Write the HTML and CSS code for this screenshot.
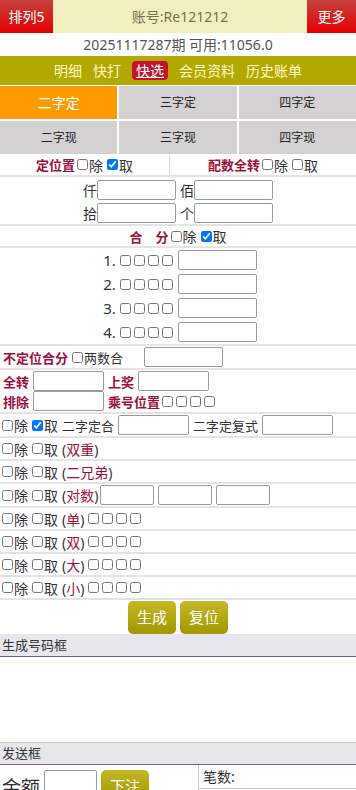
FILE: index.html
```html
<!DOCTYPE html>
<html>
<head>
	<title>快选</title>
	<meta charset="utf-8">
	<link rel="stylesheet" href="styles.css">
</head>
<body>
	<!-- 顶部栏 -->
	<div class="top">
		<a href="#" class="top-btn">排列5</a>
		<div class="top-account">账号:Re121212</div>
		<a href="#" class="top-btn top-more">更多</a>
	</div>
	<div class="top-info">20251117287期 可用:11056.0</div>
	<!-- 导航 -->
	<div class="nav">
		<a href="#" class="nav-item">明细</a>
		<a href="#" class="nav-item">快打</a>
		<a href="#" class="nav-item active">快选</a>
		<a href="#" class="nav-item">会员资料</a>
		<a href="#" class="nav-item">历史账单</a>
	</div>
	<!-- 玩法切换 -->
	<div class="tabs">
		<div class="tab active">二字定</div>
		<div class="tab">三字定</div>
		<div class="tab">四字定</div>
		<div class="tab">二字现</div>
		<div class="tab">三字现</div>
		<div class="tab">四字现</div>
	</div>

	<!-- 定位置 / 配数全转 -->
	<div class="row split">
		<div class="half half-left">
			<span class="label">定位置</span>
			<input type="checkbox" class="chk">除
			<input type="checkbox" class="chk gap" checked>取
		</div>
		<div class="half">
			<span class="label">配数全转</span>
			<input type="checkbox" class="chk">除
			<input type="checkbox" class="chk gap">取
		</div>
	</div>
	<div class="row pos-box">
		<div class="line center">
			<span>仟</span><input type="text" class="txt">
			<span class="pos-name">佰</span><input type="text" class="txt">
		</div>
		<div class="line center">
			<span>拾</span><input type="text" class="txt">
			<span class="pos-name">个</span><input type="text" class="txt">
		</div>
	</div>

	<!-- 合分 -->
	<div class="row">
		<div class="line line-sum center">
			<span class="label">合　分</span>
			<input type="checkbox" class="chk">除
			<input type="checkbox" class="chk gap" checked>取
		</div>
	</div>
	<div class="row sum-box">
		<div class="line center">
			<span class="num">1.</span>
			<input type="checkbox" class="chk"><input type="checkbox" class="chk"><input type="checkbox" class="chk"><input type="checkbox" class="chk">
			<input type="text" class="txt sum-txt">
		</div>
		<div class="line center">
			<span class="num">2.</span>
			<input type="checkbox" class="chk"><input type="checkbox" class="chk"><input type="checkbox" class="chk"><input type="checkbox" class="chk">
			<input type="text" class="txt sum-txt">
		</div>
		<div class="line center">
			<span class="num">3.</span>
			<input type="checkbox" class="chk"><input type="checkbox" class="chk"><input type="checkbox" class="chk"><input type="checkbox" class="chk">
			<input type="text" class="txt sum-txt">
		</div>
		<div class="line center">
			<span class="num">4.</span>
			<input type="checkbox" class="chk"><input type="checkbox" class="chk"><input type="checkbox" class="chk"><input type="checkbox" class="chk">
			<input type="text" class="txt sum-txt">
		</div>
	</div>

	<!-- 不定位合分 -->
	<div class="row">
		<div class="line line-tall indent">
			<span class="label">不定位合分</span>
			<input type="checkbox" class="chk gap">
			<span class="small">两数合</span>
			<input type="text" class="txt two-txt">
		</div>
	</div>

	<!-- 全转 / 排除 -->
	<div class="row turn-box">
		<div class="line line-s indent">
			<span class="label">全转</span><input type="text" class="txt mid-txt">
			<span class="label">上奖</span><input type="text" class="txt mid-txt">
		</div>
		<div class="line line-s indent">
			<span class="label">排除</span><input type="text" class="txt mid-txt">
			<span class="label">乘号位置</span>
			<input type="checkbox" class="chk"><input type="checkbox" class="chk"><input type="checkbox" class="chk"><input type="checkbox" class="chk">
		</div>
	</div>

	<!-- 二字定合 -->
	<div class="row">
		<div class="line line-tall">
			<input type="checkbox" class="chk">除
			<input type="checkbox" class="chk gap" checked>取
			<span class="word">二字定合</span><input type="text" class="txt mid-txt">
			<span class="small">二字定复式</span><input type="text" class="txt mid-txt">
		</div>
	</div>

	<div class="row">
		<div class="line">
			<input type="checkbox" class="chk">除
			<input type="checkbox" class="chk gap">取
			<span class="kind">(<em>双重</em>)</span>
		</div>
	</div>
	<div class="row">
		<div class="line">
			<input type="checkbox" class="chk">除
			<input type="checkbox" class="chk gap">取
			<span class="kind">(<em>二兄弟</em>)</span>
		</div>
	</div>
	<div class="row">
		<div class="line line-tall">
			<input type="checkbox" class="chk">除
			<input type="checkbox" class="chk gap">取
			<span class="kind">(<em>对数</em>)</span>
			<input type="text" class="txt pair-txt"><input type="text" class="txt pair-txt"><input type="text" class="txt pair-txt">
		</div>
	</div>
	<div class="row">
		<div class="line">
			<input type="checkbox" class="chk">除
			<input type="checkbox" class="chk gap">取
			<span class="kind">(<em>单</em>)</span>
			<input type="checkbox" class="chk"><input type="checkbox" class="chk"><input type="checkbox" class="chk"><input type="checkbox" class="chk">
		</div>
	</div>
	<div class="row">
		<div class="line">
			<input type="checkbox" class="chk">除
			<input type="checkbox" class="chk gap">取
			<span class="kind">(<em>双</em>)</span>
			<input type="checkbox" class="chk"><input type="checkbox" class="chk"><input type="checkbox" class="chk"><input type="checkbox" class="chk">
		</div>
	</div>
	<div class="row">
		<div class="line">
			<input type="checkbox" class="chk">除
			<input type="checkbox" class="chk gap">取
			<span class="kind">(<em>大</em>)</span>
			<input type="checkbox" class="chk"><input type="checkbox" class="chk"><input type="checkbox" class="chk"><input type="checkbox" class="chk">
		</div>
	</div>
	<div class="row">
		<div class="line">
			<input type="checkbox" class="chk">除
			<input type="checkbox" class="chk gap">取
			<span class="kind">(<em>小</em>)</span>
			<input type="checkbox" class="chk"><input type="checkbox" class="chk"><input type="checkbox" class="chk"><input type="checkbox" class="chk">
		</div>
	</div>

	<!-- 按钮 -->
	<div class="btns">
		<a href="#" class="btn">生成</a>
		<a href="#" class="btn">复位</a>
	</div>

	<!-- 生成号码框 -->
	<div class="box-title">生成号码框</div>
	<div class="box-body"></div>

	<!-- 发送框 -->
	<div class="box-title send-title">发送框</div>
	<div class="send">
		<div class="send-left">
			<span class="money">金额</span>
			<input type="text" class="txt money-txt">
			<a href="#" class="btn send-btn">下注</a>
		</div>
		<div class="send-right">
			<div class="count">笔数:</div>
		</div>
	</div>
</body>
</html>
```

FILE: styles.css
```css
body {
	margin: 0;
	width: 356px;
	font-family: "Noto Sans", "Noto Sans CJK SC", sans-serif;
	font-size: 14px;
	color: #333;
	overflow: hidden;
}
a {
	text-decoration: none;
}
em {
	font-style: normal;
}
/* 顶部栏 */
.top {
	display: flex;
	height: 33px;
	background-color: #f2efbf;
}
.top-btn {
	width: 53px;
	line-height: 33px;
	text-align: center;
	color: #fff;
	background: linear-gradient(#c6413f, #e50000);
}
.top-more {
	width: 49px;
}
.top-account {
	flex: 1;
	line-height: 33px;
	text-align: center;
	color: #7a7255;
}
.top-info {
	height: 23px;
	line-height: 23px;
	text-align: center;
	color: #555;
}
/* 导航 */
.nav {
	display: flex;
	justify-content: center;
	align-items: center;
	gap: 11px;
	height: 29px;
	background-color: #b2a800;
	font-size: 14px;
}
.nav-item {
	color: #fff8cc;
	line-height: 19px;
}
.nav-item.active {
	background-color: #c4122f;
	color: #fff;
	text-decoration: underline;
	border-radius: 4px;
	padding: 0 4px;
}
/* 玩法切换 */
.tabs {
	display: grid;
	grid-template-columns: repeat(3, 1fr);
	gap: 2px;
	padding-top: 1px;
}
.tab {
	height: 33px;
	line-height: 33px;
	text-align: center;
	background-color: #d3d1d1;
	font-size: 12px;
	color: #222;
}
.tab.active {
	background-color: #ff9a00;
	color: #fff;
	font-size: 14px;
}
/* 表单行 */
.row {
	border-bottom: 2px solid #e4e4e4;
}
.line {
	display: flex;
	align-items: center;
	height: 21px;
	white-space: nowrap;
}
.line.center {
	justify-content: center;
}
.line-tall {
	height: 22px;
}
.line-s {
	height: 20px;
}
.line-sum {
	height: 20px;
}
.indent {
	padding-left: 3px;
}
.label {
	color: #a0103c;
	font-weight: bold;
	font-size: 13px;
}
.small {
	font-size: 13px;
}
.chk {
	width: 11px;
	height: 11px;
	margin: 0 1px 0 2px;
}
.chk.gap {
	margin-left: 4px;
}
.txt {
	box-sizing: border-box;
	width: 79px;
	height: 20px;
	margin: 0;
	padding: 0 2px;
	border: 1px solid #9a9a9a;
	border-radius: 2px;
	background: #fff;
}
.split {
	display: flex;
	height: 21px;
}
.half {
	flex: 1;
	display: flex;
	align-items: center;
	justify-content: center;
}
.half-left {
	flex: 0 0 169px;
	border-right: 1px solid #ddd;
}
.pos-box {
	padding-top: 1px;
}
.pos-box .line {
	height: 23px;
}
.pos-name {
	margin-left: 4px;
}
.sum-box .line {
	height: 24px;
	padding-left: 4px;
}
.num {
	font-size: 15px;
	margin-right: 2px;
}
.sum-txt {
	margin-left: 4px;
}
.two-txt {
	margin-left: 21px;
}
.turn-box {
	padding: 1px 0;
}
.mid-txt {
	width: 71px;
	margin: 0 4px;
}
.word {
	margin-left: 4px;
	font-size: 13px;
}
.kind {
	margin: 0 2px 0 4px;
	font-size: 14px;
}
.kind em {
	color: #a0103c;
}
.pair-txt {
	width: 54px;
	margin-right: 4px;
}
/* 按钮 */
.btn {
	display: inline-block;
	width: 48px;
	height: 33px;
	line-height: 33px;
	text-align: center;
	color: #fff;
	font-size: 15px;
	border-radius: 5px;
	background: linear-gradient(#c4b925, #a19700);
}
.btns {
	display: flex;
	justify-content: center;
	gap: 4px;
	padding-top: 1px;
}
/* 号码框 */
.box-title {
	height: 22px;
	line-height: 22px;
	padding-left: 2px;
	font-size: 13px;
	color: #333;
	background-color: #e6e6ec;
	border-bottom: 1px solid #7a55a8;
}
.box-body {
	height: 85px;
}
.send-title {
	border-top: 1px solid #ccc;
	height: 21px;
	line-height: 21px;
}
.send {
	display: flex;
}
.send-left {
	flex: 0 0 198px;
	display: flex;
	align-items: flex-start;
	padding-top: 5px;
}
.money {
	font-size: 19px;
	line-height: 24px;
	margin: 6px 4px 0 2px;
}
.money-txt {
	width: 53px;
	height: 28px;
}
.send-btn {
	margin-left: 4px;
	height: 30px;
}
.send-right {
	flex: 1;
	border-left: 1px solid #ccc;
}
.count {
	height: 23px;
	line-height: 23px;
	padding-left: 4px;
	border-bottom: 1px solid #ccc;
}
```
